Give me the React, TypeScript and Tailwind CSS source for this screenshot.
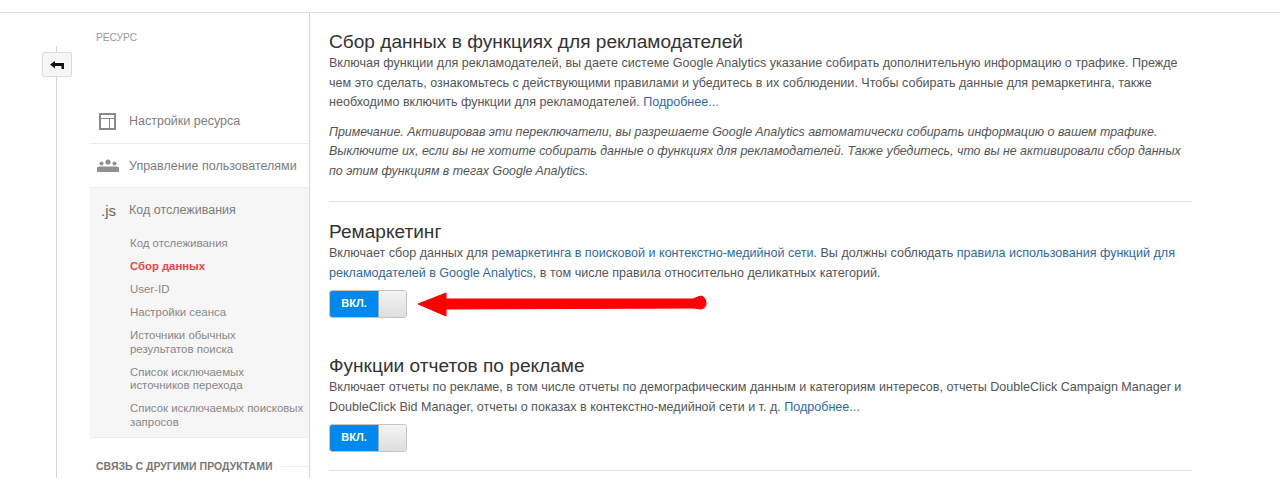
const link = "text-[#2f6a9f]";

function Toggle() {
  return (
    <div className="flex h-[28px] w-[78px] overflow-hidden rounded-[3px] border border-[#c4c4c4]">
      <div className="flex w-[48px] items-center justify-center bg-[#0088ee] text-[11px] font-bold text-white">ВКЛ.</div>
      <div className="flex-1 border-l border-[#aaaaaa] bg-gradient-to-b from-[#f4f4f4] to-[#dedede]"></div>
    </div>
  );
}

function NavRow({ icon, label, className }: { icon: React.ReactNode; label: string; className: string }) {
  return (
    <div className={`flex items-center ${className}`}>
      <div className="mr-[4px] flex w-[35px] justify-center">{icon}</div>
      <span className="text-[12.5px] text-[#7d7d7d]">{label}</span>
    </div>
  );
}

const subItems = [
  "Код отслеживания",
  "Сбор данных",
  "User-ID",
  "Настройки сеанса",
  "Источники обычных\nрезультатов поиска",
  "Список исключаемых\nисточников перехода",
  "Список исключаемых поисковых\nзапросов",
];

export default function App() {
  return (
    <div className="relative h-[478px] w-[1280px] overflow-hidden bg-white font-['Liberation_Sans',Arial,sans-serif]">
      <div className="h-[13px] border-b border-[#dddddd]"></div>
      <div className="flex h-[465px]">
        {/* rail with the back button */}
        <div className="relative w-[90px] shrink-0">
          <div className="absolute bottom-0 left-[56px] top-[33px] w-px bg-[#d6d6d6]"></div>
          <div className="relative ml-[42px] mt-[39px] flex h-[25px] w-[30px] items-center justify-center rounded-[2px] border border-[#dcdcdc] bg-[#f6f6f6]">
            <svg width="14" height="8" viewBox="0 0 14 8">
              <path d="M0 3.5 L5 0 V2 H14 V8 H11.5 V5 H5 V7.5 Z" fill="#111111" />
            </svg>
          </div>
        </div>

        {/* sidebar */}
        <div className="w-[220px] shrink-0 border-r border-[#d6d6d6]">
          <div className="pl-[6px] pt-[19px] text-[10.2px] leading-[12px] text-[#999999]">РЕСУРС</div>
          <div className="mt-[55px]">
            <NavRow
              className="h-[45px] border-b border-[#ececec]"
              label="Настройки ресурса"
              icon={
                <svg width="17" height="17" viewBox="0 0 17 17" fill="none" stroke="#8a8a8a">
                  <rect x="1" y="1" width="15" height="15" strokeWidth="2" />
                  <path d="M1 5.5 H16 M10.5 5.5 V16" strokeWidth="1" />
                </svg>
              }
            />
            <NavRow
              className="h-[44px] border-b border-[#ececec] pt-[1px]"
              label="Управление пользователями"
              icon={
                <svg width="22" height="14" viewBox="0 0 22 14" fill="#8f8f8f">
                  <circle cx="4.5" cy="4.5" r="2" />
                  <circle cx="11" cy="3" r="2.6" />
                  <circle cx="17.5" cy="4.5" r="2" />
                  <path d="M0 13 V9 Q0 7.5 3 7.5 H19 Q22 7.5 22 9 V13 Z" />
                </svg>
              }
            />
            <div className="border-b border-[#ececec] bg-[#f6f6f6] pb-[8px]">
              <NavRow
                className="h-[44px]"
                label="Код отслеживания"
                icon={<span className="pl-[2px] text-[15px] leading-none text-[#666666]">.js</span>}
              />
              <div className="flex flex-col gap-[9.5px] pl-[40px] pt-[5px] text-[11.45px] leading-[13.5px] text-[#888888]">
                {subItems.map((item) => (
                  <div key={item} className={item === "Сбор данных" ? "text-[11.3px] font-bold text-[#e2474b]" : "whitespace-pre-line"}>
                    {item}
                  </div>
                ))}
              </div>
            </div>
          </div>
          <div className="flex items-center gap-[9px] pl-[6px] pt-[22px]">
            <span className="whitespace-nowrap text-[10.5px] font-bold leading-[12px] text-[#777777]">СВЯЗЬ С ДРУГИМИ ПРОДУКТАМИ</span>
            <div className="h-px grow bg-[#eeeeee]"></div>
          </div>
        </div>

        {/* content */}
        <div className="ml-[19px] w-[863px] shrink-0 text-[12.55px] leading-[19.5px] text-[#555555]">
          <section className="h-[189px] border-b border-[#e2e2e2] pt-[17px]">
            <h2 className="text-[19.1px] leading-[24px] text-[#333333]">Сбор данных в функциях для рекламодателей</h2>
            <p>
              Включая функции для рекламодателей, вы даете системе Google Analytics указание собирать дополнительную информацию о трафике. Прежде чем это сделать, ознакомьтесь с действующими правилами и убедитесь в их соблюдении. Чтобы собирать данные для ремаркетинга, также необходимо включить функции для рекламодателей. <span className={link}>Подробнее...</span>
            </p>
            <p className="mt-[10px] text-[12.4px] italic">
              Примечание. Активировав эти переключатели, вы разрешаете Google Analytics автоматически собирать информацию о вашем трафике. Выключите их, если вы не хотите собирать данные о функциях для рекламодателей. Также убедитесь, что вы не активировали сбор данных по этим функциям в тегах Google Analytics.
            </p>
          </section>
          <section className="pt-[18px]">
            <h2 className="text-[19.1px] leading-[24px] text-[#333333]">Ремаркетинг</h2>
            <p>
              Включает сбор данных для <span className={link}>ремаркетинга в поисковой и контекстно-медийной сети</span>. Вы должны соблюдать <span className={link}>правила использования функций для рекламодателей в Google Analytics</span>, в том числе правила относительно деликатных категорий.
            </p>
            <div className="mt-[7px]">
              <Toggle />
            </div>
          </section>
          <section className="mt-[36px] h-[117px] border-b border-[#e2e2e2]">
            <h2 className="text-[19.1px] leading-[24px] text-[#333333]">Функции отчетов по рекламе</h2>
            <p>
              Включает отчеты по рекламе, в том числе отчеты по демографическим данным и категориям интересов, отчеты DoubleClick Campaign Manager и DoubleClick Bid Manager, отчеты о показах в контекстно-медийной сети и т. д. <span className={link}>Подробнее...</span>
            </p>
            <div className="mt-[7px]">
              <Toggle />
            </div>
          </section>
        </div>
      </div>

      {/* red arrow drawn over the screenshot */}
      <svg className="absolute left-[415px] top-[290px]" width="295" height="28" viewBox="0 0 295 28">
        <path d="M3 14 L31 3 L31 9 L278 9 Q284 6 287 6 Q291 8 291 13 Q291 18 286 19 L278 18 L31 19 L31 26 Z" fill="#ff0000" stroke="#ff0000" strokeWidth="1" strokeLinejoin="round" />
      </svg>
    </div>
  );
}
